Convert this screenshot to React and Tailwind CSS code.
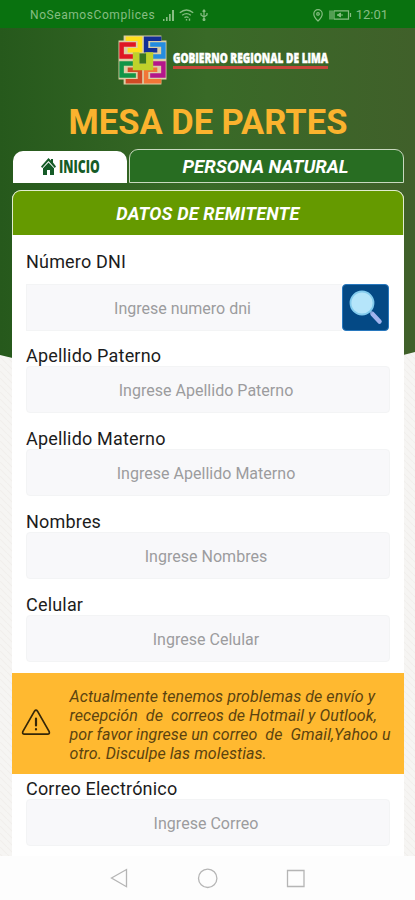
import React from 'react';

const fields = [
  { label: 'Apellido Paterno', hint: 'Ingrese Apellido Paterno' },
  { label: 'Apellido Materno', hint: 'Ingrese Apellido Materno' },
  { label: 'Nombres', hint: 'Ingrese Nombres' },
  { label: 'Celular', hint: 'Ingrese Celular' },
];

const logoStrokes = [
  { d: 'M8 4.200H22V15.500H10', color: '#ffe01b' },
  { d: 'M18 9.700H4V21.500H17', color: '#df1624' },
  { d: 'M43 4.200H28V15.500H39', color: '#132f96' },
  { d: 'M32 9.700H45V21.500H32', color: '#258de0' },
  { d: 'M8 45.800H22V34.500H10', color: '#cf4a25' },
  { d: 'M18 40.300H4V28.500H17', color: '#119547' },
  { d: 'M43 45.800H28V34.500H39', color: '#f27637' },
  { d: 'M32 40.300H45V28.500H32', color: '#b4168b' },
];

function StatusBar() {
  return (
    <div className="flex h-7 items-center bg-[#09720f] pl-[30px] pr-[27px] text-[#86bd82]">
      <span className="pt-0.5 text-[12px] tracking-[0.57px] whitespace-nowrap">NoSeamosComplices</span>
      <svg className="ml-2 mt-0.5 h-3 w-3" viewBox="0 0 12 12" fill="currentColor">
        <path d="M0 10h1.500v2H0zM3 8h1.600v4H3zM6 5h1.700v7H6zM9 1h2v11H9z" />
      </svg>
      <svg className="ml-1 mt-0.5 h-3 w-[15px]" viewBox="0 0 15 12" fill="none" stroke="currentColor" strokeWidth="1.400">
        <path d="M.8 3.700Q7.500-1.700 14.200 3.700M3.200 6.300Q7.500 3 11.800 6.300M5.500 8.600q2-1.400 4 0M7.500 10v1.500M10.500 9.500v2.300" />
      </svg>
      <svg className="ml-[6px] mt-0.5 h-3 w-2" viewBox="0 0 8 12" fill="none" stroke="currentColor" strokeWidth="1.200">
        <path d="M4 1v10M2.600 2.600 4 1l1.400 1.600M1 4v2l3 2 3-2V4" />
        <circle cx="4" cy="10.600" r=".9" fill="currentColor" />
      </svg>
      <svg className="ml-auto mt-0.5 h-[13px] w-[10px]" viewBox="0 0 10 13" fill="none" stroke="currentColor" strokeWidth="1.200">
        <path d="M5 12Q.8 7.800.8 4.900a4.200 4.200 0 0 1 8.400 0Q9.200 7.800 5 12z" />
        <circle cx="5" cy="4.900" r="1.300" />
      </svg>
      <svg className="ml-[6px] mt-0.5 h-[10px] w-[23px]" viewBox="0 0 23 10" fill="none" stroke="currentColor">
        <path d="M5 .8h14.500v8.400H5M1 .5v9M3 .5v9M5 .5v9M21.500 3v4M8 5h6" strokeWidth="1.200" />
        <path d="m8.500 5 3-2v4z" fill="currentColor" />
      </svg>
      <span className="ml-[4px] pt-0.5 text-[13px]">12:01</span>
    </div>
  );
}

function Logo() {
  return (
    <svg className="h-[50px] w-[49px]" viewBox="0.5 0.5 48 49">
      <path d="M6 1h37v5h5v38h-5v5H6v-5H1V6h5z" fill="#dccfa6" />
      {logoStrokes.map((s) => (
        <path key={s.color} d={s.d} fill="none" stroke={s.color} strokeWidth="4.400" />
      ))}
      <path d="M15 17.500h6.500v11h6v-11H35V35H15z" fill="#bfd22b" />
      <path d="M21.500 18.500h6.500v10h-6.500z" fill="#397620" />
    </svg>
  );
}

function Header() {
  return (
    <header className="h-[162px]">
      <div className="flex pl-[118px] pt-[7px]">
        <Logo />
        <div className="ml-1.5 mt-[14px] h-[20px] w-[155px] border-b-[3px] border-[#c9453a]">
          <div className="origin-left scale-x-[0.722] whitespace-nowrap font-['Open_Sans',sans-serif] text-[14px] font-extrabold leading-[17px] text-white [-webkit-text-stroke:0.5px_white]">
            GOBIERNO REGIONAL DE LIMA
          </div>
        </div>
      </div>
      <h1 className="mt-[17px] pl-px text-center text-[34.500px] font-bold leading-[41px] text-[#fbb32e]">MESA DE PARTES</h1>
      <nav className="mt-[6px] flex items-end gap-0.5 pl-[13px] pr-[11px]">
        <div className="flex h-8 w-[114px] items-center justify-center gap-[3px] rounded-t-[10px] bg-white text-[#155b27]">
          <svg className="h-[18px] w-[15px]" viewBox="0 0 15 18" fill="currentColor">
            <path d="M7.500 0 10 2.500V1h2v3.500l3 4-1.200 1.400L7.500 3 1.200 9.900 0 8.500z" />
            <path d="M2 10.200 7.500 4.500l5.500 5.700V17H9v-5H6v5H2z" />
          </svg>
          <span className="w-[41px] origin-left scale-x-[0.72] font-['Open_Sans',sans-serif] text-[17px] font-extrabold">INICIO</span>
        </div>
        <div className="flex h-[34px] flex-1 items-center justify-center rounded-t-[9px] border border-[#c8d8bf] bg-[#286d22] pr-0.5 pt-[3px] text-[18.500px] font-bold italic text-white">
          PERSONA NATURAL
        </div>
      </nav>
    </header>
  );
}

function Label({ children }) {
  return <div className="h-[22px] whitespace-nowrap text-[18px] leading-[23px] tracking-[0.19px] text-[#1c1c1c]">{children}</div>;
}

function Input({ children }) {
  return (
    <div className="flex h-[47px] items-center justify-center rounded-[4px] border border-[#f3f4f5] bg-[#f8f8fa] pr-1 pt-0.5 text-[16px] tracking-[0.02px] text-[#9c9c9e]">
      {children}
    </div>
  );
}

function Warning() {
  return (
    <div className="mt-[11px] flex h-[101px] bg-[#ffb930]">
      <svg className="ml-[9px] mt-9 h-[27px] w-[30px]" viewBox="0 0 30 27" fill="none" stroke="#352708" strokeLinecap="round" strokeLinejoin="round">
        <path d="M13.500 2.200q1.500-2 3 0l11.700 20.500q.8 2.500-1.700 2.500h-23Q1 25.200 1.800 22.700z" strokeWidth="1.700" />
        <path d="M15 9.500v7M15 20v.5" strokeWidth="2.200" />
      </svg>
      <p className="ml-[18.500px] mt-[14px] whitespace-pre text-[16px] italic leading-[19px] tracking-[0.07px] text-[#5b430f]">
        {'Actualmente tenemos problemas de envío y\nrecepción  de  correos de Hotmail y Outlook,\npor favor ingrese un correo  de  Gmail,Yahoo u\notro. Disculpe las molestias.'}
      </p>
    </div>
  );
}

export default function App() {
  return (
    <div className="relative h-[900px] w-[415px] overflow-hidden bg-[#f6f5f3] font-[Roboto,sans-serif]">
      <svg className="absolute inset-0 h-[900px] w-[415px]" viewBox="0 0 415 900">
        <defs>
          <linearGradient id="hill" x1="0" x2="1">
            <stop offset="0" stopColor="#26591c" />
            <stop offset=".5" stopColor="#396a27" />
            <stop offset="1" stopColor="#40602a" />
          </linearGradient>
          <pattern id="weave" width="7" height="7" patternUnits="userSpaceOnUse">
            <path d="M0 0l7 7" stroke="#f1efed" strokeWidth="1.200" />
          </pattern>
        </defs>
        <rect width="415" height="900" fill="url(#weave)" />
        <path d="M0 0h415v352L208 405 0 355z" fill="url(#hill)" />
      </svg>
      <div className="relative flex h-full flex-col">
        <StatusBar />
        <Header />
        <main className="ml-3 mr-[11px] h-[666px] overflow-hidden rounded-t-[9px] bg-white">
          <div className="flex h-[45px] items-center justify-center rounded-t-[9px] border border-b-0 border-[#e1edcf] bg-[#659a00] text-[18px] font-bold italic tracking-[0.2px] text-white">
            DATOS DE REMITENTE
          </div>
          <div className="px-[14px] pt-[15px]">
            <Label>Número DNI</Label>
            <div className="mb-[13px] mt-3 flex pr-px">
              <div className="flex h-[47px] flex-1 items-center justify-center border border-r-0 border-[#f3f4f5] bg-[#f8f8fa] pr-1 pt-0.5 text-[16px] text-[#9c9c9e]">
                Ingrese numero dni
              </div>
              <button className="flex h-[47px] w-[47px] rounded-[4px] border-[1.500px] border-[#2878be] bg-[#044985]">
                <svg className="h-11 w-11" viewBox="0 0 44 44">
                  <path d="m29.500 29 7 7.500" stroke="#a2b4ee" strokeWidth="4.500" strokeLinecap="round" />
                  <path d="m26 25 3 3" stroke="#80a4d8" strokeWidth="2" />
                  <circle cx="19" cy="18" r="11.500" fill="#b5e5fa" stroke="#83cbed" strokeWidth="1.800" />
                </svg>
              </button>
            </div>
            <div className="flex flex-col gap-[14px]">
              {fields.map((f) => (
                <div key={f.label}>
                  <Label>{f.label}</Label>
                  <Input>{f.hint}</Input>
                </div>
              ))}
            </div>
          </div>
          <Warning />
          <div className="px-[14px] pt-[3px]">
            <Label>Correo Electrónico</Label>
            <Input>Ingrese Correo</Input>
          </div>
        </main>
        <footer className="flex h-11 items-center justify-center bg-[#fdfdfd]">
          <svg className="h-11 w-[415px]" viewBox="0 0 415 44" fill="none" stroke="#b5b5b5" strokeWidth="1.300">
            <path d="M111.500 22 126.500 13.500v17.200z" />
            <circle cx="207.700" cy="22.300" r="9.200" />
            <path d="M287.500 14.500h16.500v16h-16.500z" />
          </svg>
        </footer>
      </div>
    </div>
  );
}
